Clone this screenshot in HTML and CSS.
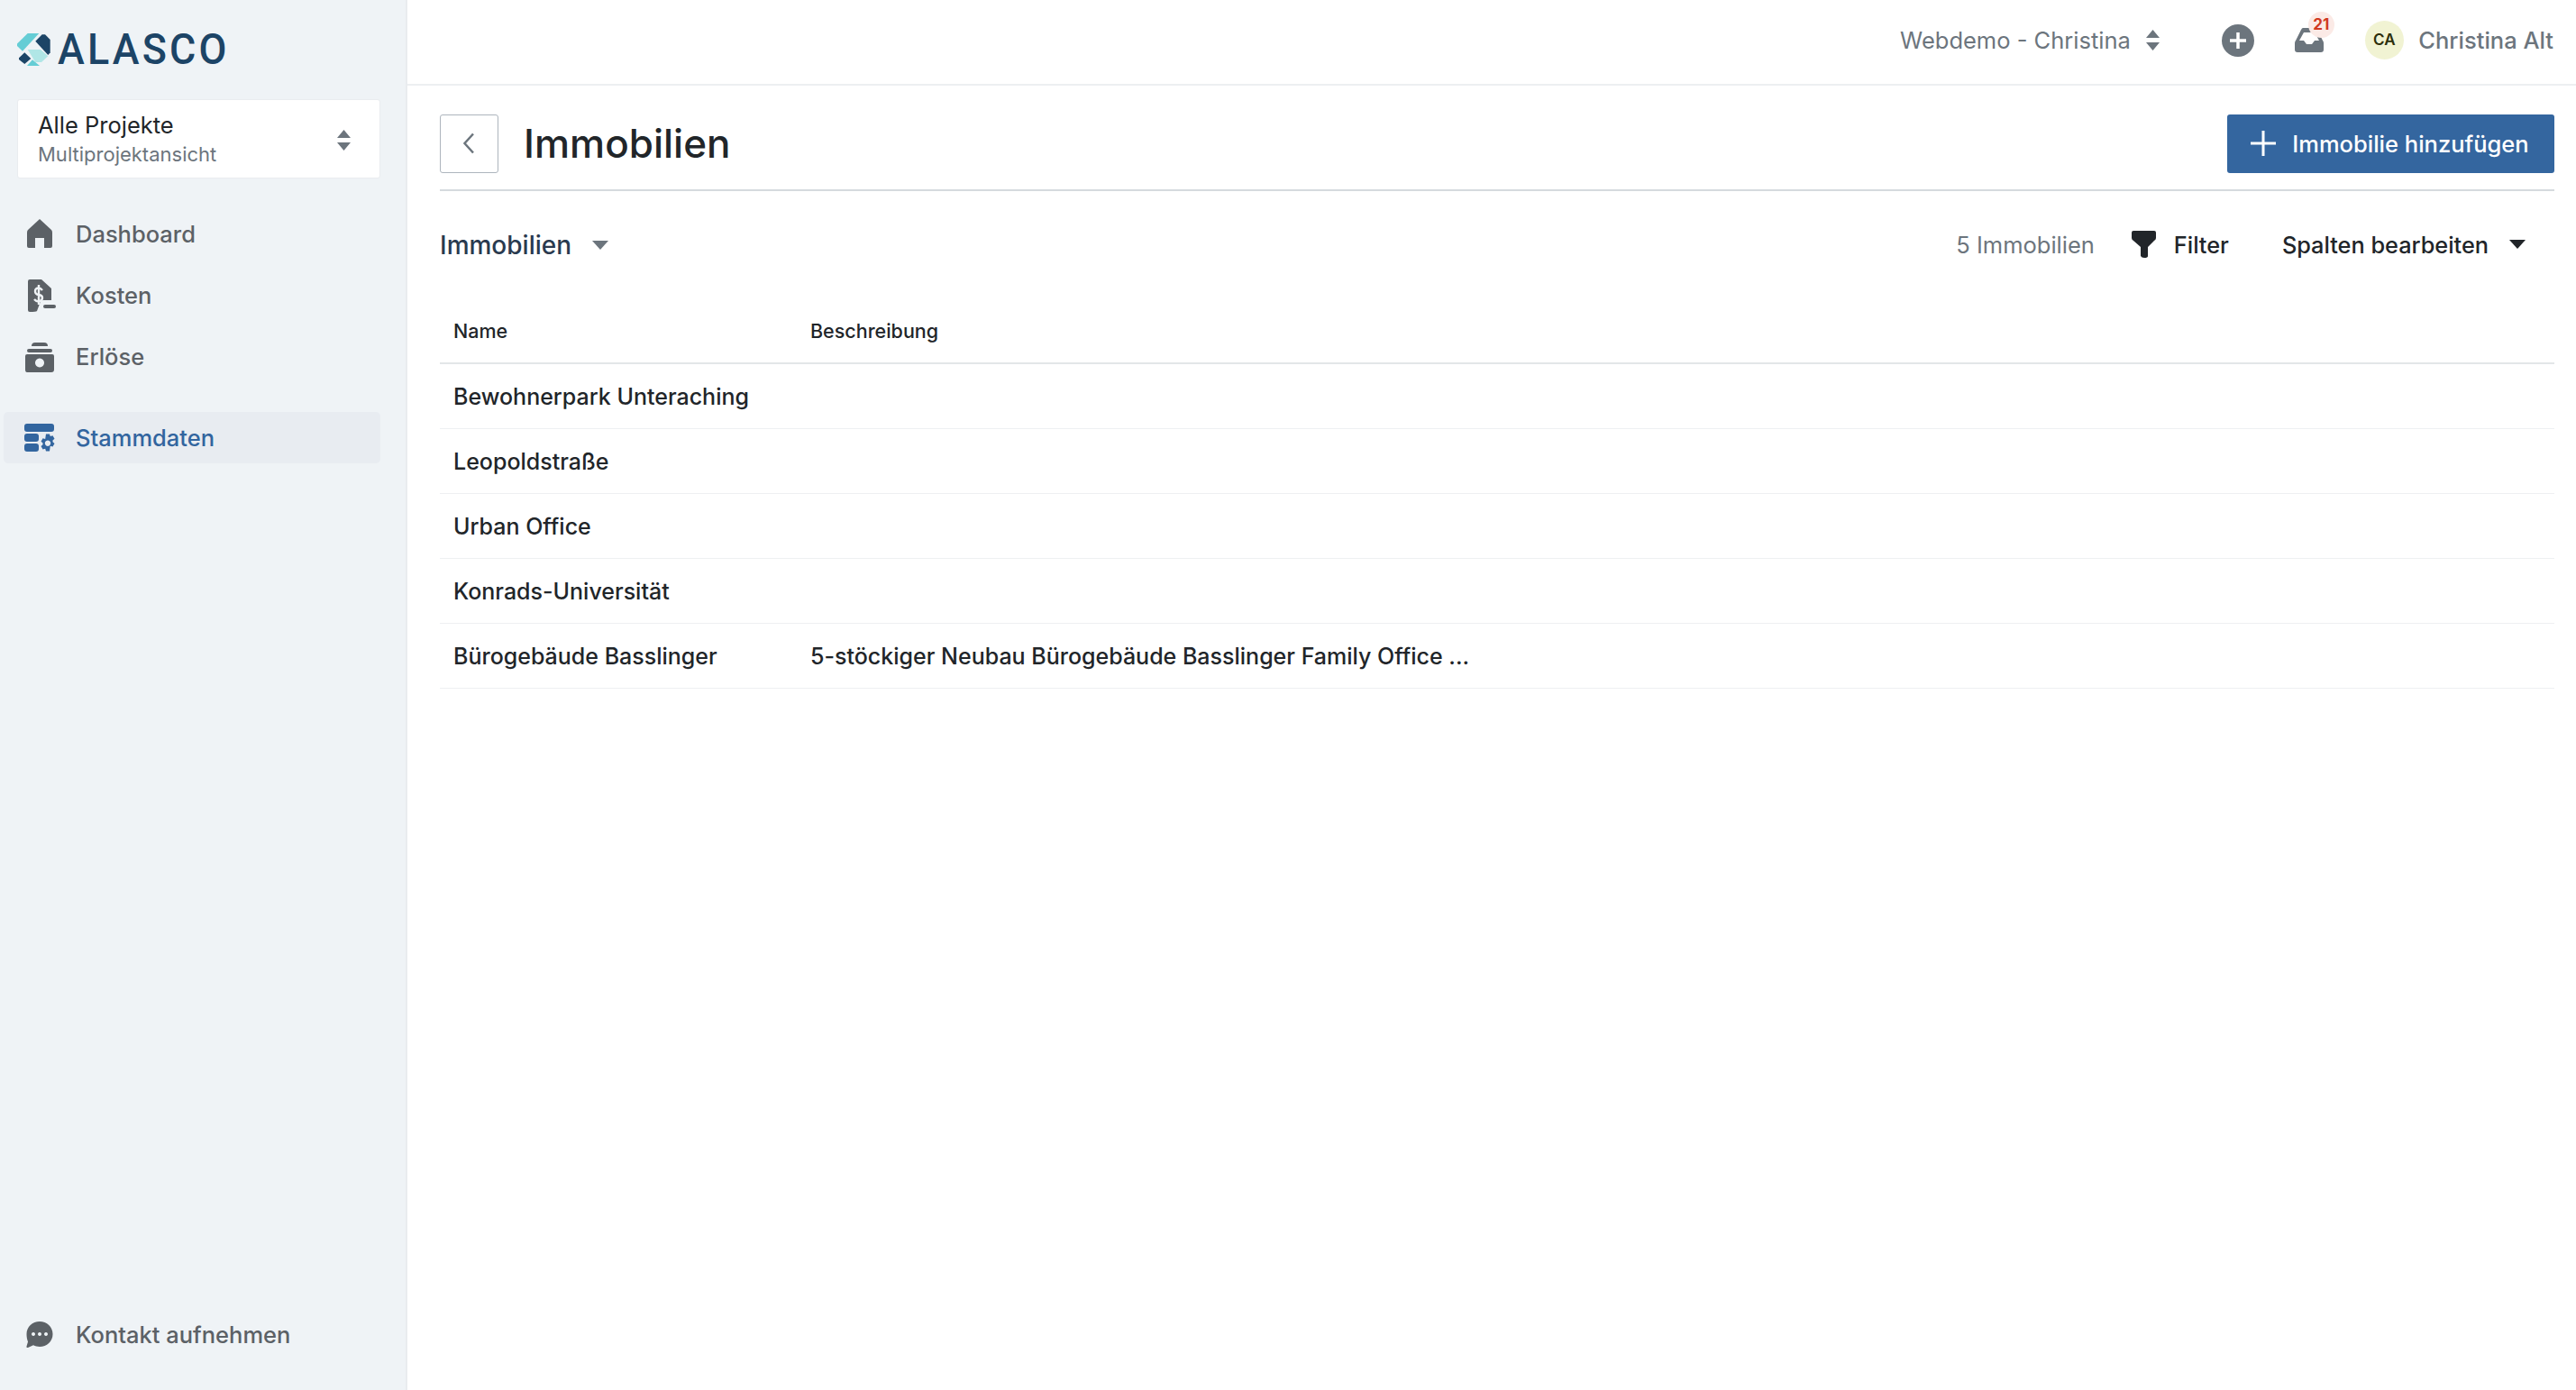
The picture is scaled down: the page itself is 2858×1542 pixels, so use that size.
FILE: index.html
```html
<!DOCTYPE html>
<html lang="de">
<head>
    <meta charset="UTF-8">
    <title>Immobilien</title>
    <link rel="stylesheet" href="styles.css">
</head>
<body>
    <aside class="sidebar">
        <div class="logo">
            <svg class="logo-mark" viewBox="0 0 37 36" width="37" height="36">
                <polygon fill="#65cdd5" points="0,11.5 11.7,0 24.3,0 6,19.7 0,14"/>
                <polygon fill="#1c4466" points="20.3,8.7 27.7,1.3 31,1.3 36.7,7 36.7,21.3 34.3,24"/>
                <polygon fill="#b0e6e6" points="11.7,18 26,18 34.3,25.3 27,32 20.3,32"/>
                <polygon fill="#1c4466" points="2,27.3 8.3,21.3 15.3,28 8.3,34 2,29"/>
                <polygon fill="#65cdd5" points="11,36 17,29.3 25,36"/>
            </svg>
            <span class="logo-text">ALASCO</span>
        </div>

        <div class="project-select">
            <div>
                <div class="project-name">Alle Projekte</div>
                <div class="project-sub">Multiprojektansicht</div>
            </div>
            <svg class="updown" viewBox="0 0 15 23" width="15" height="23">
                <path d="M7.5 0 15 9H0zM0 14h15l-7.5 9z"/>
            </svg>
        </div>

        <nav class="nav">
            <a class="nav-item">
                <svg class="nav-icon" viewBox="0 0 36 34" width="36" height="34">
                    <path d="M18 0 31 12q1 1 1 3v15q0 2-2 2h-7V21H13v11H6q-2 0-2-2V15q0-2 1-3z"/>
                </svg>
                Dashboard
            </a>
            <a class="nav-item">
                <svg class="nav-icon" viewBox="0 0 36 38" width="36" height="38">
                    <path d="M7 1H20L31 11V24H22Q19 24 18 28L15 36Q14 37 7 37 5 37 5 35V3Q5 1 7 1Z"/>
                    <path fill="none" stroke="#eff3f6" stroke-width="2.4" d="M21 13Q19 10.500 17 10.500 13 10.500 13 14t4 4 4 3.500-4 4q-3 0-5-2.500M17 7V29"/>
                    <rect x="22" y="29" width="14" height="4" rx="2"/>
                </svg>
                Kosten
            </a>
            <a class="nav-item">
                <svg class="nav-icon" viewBox="0 0 36 34" width="36" height="34">
                    <path d="M9 5q0-4 4-4h10q4 0 4 4z"/>
                    <rect x="4" y="8" width="28" height="4" rx="2"/>
                    <path fill-rule="evenodd" d="M4 14h28q2 0 2 2v15q0 3-3 3H4q-2 0-2-3V16q0-2 2-2zm14 4.500a5 5 0 1 0 .01 0z"/>
                </svg>
                Erlöse
            </a>
            <a class="nav-item active">
                <svg class="nav-icon" viewBox="0 0 36 34" width="36" height="34">
                    <rect x="1" y="1" width="33" height="9" rx="3"/>
                    <rect x="1" y="12" width="16" height="9" rx="3"/>
                    <rect x="1" y="23" width="16" height="9" rx="3"/>
                    <path fill-rule="evenodd" d="M25 14h4l.8 2.500 2.700-.8 2 3.500-2 1.800v1.800l2 1.800-2 3.500-2.700-.8L29 33h-4l-.8-2.700-2.700.8-2-3.500 2-1.800V24l-2-1.800 2-3.500 2.700.8zm2 7a3.200 3.200 0 1 0 .01 0z" transform="translate(0 -1.500)"/>
                </svg>
                Stammdaten
            </a>
        </nav>

        <a class="nav-item contact">
            <svg class="nav-icon" viewBox="0 0 36 34" width="36" height="34">
                <path fill-rule="evenodd" d="M18 2c8 0 14.500 6 14.500 14S26 30 18 30c-2.500 0-5-.6-7-1.700L5 31q-2 .5-1.500-1.500l1.500-5C4 22 3.500 19 3.500 16 3.500 8 10 2 18 2zM11 14a2 2 0 1 0 .01 0zm7 0a2 2 0 1 0 .01 0zm7 0a2 2 0 1 0 .01 0z"/>
            </svg>
            Kontakt aufnehmen
        </a>
    </aside>

    <div class="main">
        <header class="topbar">
            <div class="workspace">
                Webdemo - Christina
                <svg class="updown" viewBox="0 0 15 23" width="15" height="23">
                    <path d="M7.5 0 15 9H0zM0 14h15l-7.5 9z"/>
                </svg>
            </div>
            <div class="plus-circle">
                <svg viewBox="0 0 20 20" width="20" height="20">
                    <path d="M10 1v18M1 10h18" stroke="#fff" stroke-width="3.500"/>
                </svg>
            </div>
            <div class="inbox">
                <svg viewBox="0 0 32 27" width="32" height="27">
                    <path d="M9 0h13q2 0 3 2l6 12q1 1 1 3v7q0 3-3 3H3q-3 0-3-3v-7q0-2 1-3L7 2q1-2 2-2zm1 5-5 9h5l3 4h6l3-4h5l-5-9z" fill-rule="evenodd"/>
                </svg>
                <span class="badge">21</span>
            </div>
            <div class="user">
                <span class="avatar">CA</span>
                Christina Alt
            </div>
        </header>

        <main class="content">
            <div class="page-head">
                <a class="back">
                    <svg viewBox="0 0 14 24" width="14" height="24">
                        <path d="M12 1.500 2.500 12l9.500 10.500" fill="none" stroke="#6c757d" stroke-width="2.500"/>
                    </svg>
                </a>
                <h1>Immobilien</h1>
                <a class="add-button">
                    <svg viewBox="0 0 30 30" width="30" height="30">
                        <path d="M15 1v28M1 15h28" stroke="#fff" stroke-width="3"/>
                    </svg>
                    Immobilie hinzufügen
                </a>
            </div>

            <div class="toolbar">
                <div class="view-select">
                    Immobilien
                    <span class="caret grey"></span>
                </div>
                <div class="tools">
                    <span class="count">5 Immobilien</span>
                    <span class="tool filter">
                        <svg viewBox="0 0 27 30" width="27" height="30">
                            <path d="M2 0h23q2 0 2 2v6q0 2-2 3l-7 7v10q0 2-4 2-3 0-4-2V18l-8-7q-2-1-2-3V2q0-2 2-2z" fill="#212529"/>
                        </svg>
                        Filter
                    </span>
                    <span class="tool columns">
                        Spalten bearbeiten
                        <span class="caret dark"></span>
                    </span>
                </div>
            </div>

            <table class="grid">
                <thead>
                    <tr><th class="col-name">Name</th><th>Beschreibung</th></tr>
                </thead>
                <tbody>
                    <tr><td>Bewohnerpark Unteraching</td><td></td></tr>
                    <tr><td>Leopoldstraße</td><td></td></tr>
                    <tr><td>Urban Office</td><td></td></tr>
                    <tr><td>Konrads-Universität</td><td></td></tr>
                    <tr><td>Bürogebäude Basslinger</td><td>5-stöckiger Neubau Bürogebäude Basslinger Family Office ...</td></tr>
                </tbody>
            </table>
        </main>
    </div>
</body>
</html>
```
FILE: styles.css
```css
* {
    box-sizing: border-box;
}

html, body {
    height: 100%;
}

body {
    margin: 0;
    display: flex;
    font-family: Inter, "Liberation Sans", sans-serif;
    font-size: 25.5px;
    color: #212529;
    background-color: #fff;
    overflow: hidden;
}

/* sidebar */
.sidebar {
    width: 452px;
    flex-shrink: 0;
    height: 100%;
    display: flex;
    flex-direction: column;
    background-color: #eff3f6;
    border-right: 2px solid #e9ecef;
}

.logo {
    display: flex;
    align-items: center;
    gap: 8px;
    height: 36px;
    margin: 37px 0 0 19px;
}

.logo-mark {
    flex-shrink: 0;
}

/* the real wordmark is a narrow face, so squeeze Roboto a bit */
.logo-text {
    display: inline-block;
    font-family: Roboto, sans-serif;
    font-weight: 500;
    font-size: 49px;
    line-height: 36px;
    letter-spacing: 3.5px;
    color: #1c4466;
    transform: scaleX(0.915);
    transform-origin: left center;
}

.project-select {
    display: flex;
    align-items: center;
    justify-content: space-between;
    width: 403px;
    height: 88px;
    margin: 37px 0 0 19px;
    padding: 2px 32px 0 22px;
    background-color: #fff;
    border: 1px solid #e9ecef;
    border-radius: 3px;
}

.project-name {
    line-height: 32px;
}

.project-sub {
    font-size: 22px;
    line-height: 32px;
    color: #6c757d;
}

.updown {
    fill: #6c757d;
}

.nav {
    display: flex;
    flex-direction: column;
    margin-top: 33px;
}

.nav-item {
    display: flex;
    align-items: center;
    gap: 22px;
    width: 418px;
    height: 57px;
    margin-left: 4px;
    margin-bottom: 11px;
    padding-left: 22px;
    border-radius: 5px;
    font-weight: 500;
    color: #5c6166;
}

.nav-icon {
    flex-shrink: 0;
    fill: #5c6166;
}

.nav-item.active {
    margin-top: 22px;
    background-color: #e8ecf1;
    color: #32659f;
}

.nav-item.active .nav-icon {
    fill: #32659f;
}

.contact {
    margin-top: auto;
    margin-bottom: 33px;
}

/* top bar */
.main {
    flex: 1;
    min-width: 0;
    display: flex;
    flex-direction: column;
}

.topbar {
    height: 95px;
    flex-shrink: 0;
    display: flex;
    align-items: center;
    justify-content: flex-end;
    padding: 0 25px 4px 0;
    border-bottom: 2px solid #edeff1;
    color: #6c757d;
}

.workspace {
    display: flex;
    align-items: center;
    gap: 17px;
}

.plus-circle {
    width: 36px;
    height: 36px;
    margin-left: 69px;
    display: flex;
    align-items: center;
    justify-content: center;
    border-radius: 50%;
    background-color: #6c757d;
}

.inbox {
    position: relative;
    display: flex;
    margin-left: 45px;
    fill: #6c757d;
}

.badge {
    position: absolute;
    top: -18px;
    left: 15px;
    width: 29px;
    height: 29px;
    border-radius: 50%;
    background-color: #fbeae6;
    color: #d0391f;
    font-size: 17px;
    font-weight: 700;
    line-height: 29px;
    text-align: center;
}

.user {
    display: flex;
    align-items: center;
    gap: 16.5px;
    margin-left: 46px;
    font-weight: 500;
}

.avatar {
    width: 43px;
    height: 43px;
    border-radius: 50%;
    background-color: #f1f3d3;
    color: #2c2f0b;
    font-size: 17px;
    font-weight: 600;
    line-height: 43px;
    text-align: center;
}

/* content */
.content {
    flex: 1;
    padding: 32px 24px 0 36px;
}

.page-head {
    display: flex;
    align-items: center;
    height: 85px;
    padding-bottom: 19px;
    border-bottom: 2px solid #d5dade;
}

.back {
    width: 65px;
    height: 65px;
    display: flex;
    align-items: center;
    justify-content: center;
    padding-right: 2px;
    border: 1px solid #adb5bd;
    border-radius: 3px;
}

h1 {
    margin: 0 0 0 28px;
    font-size: 44px;
    font-weight: 500;
}

.add-button {
    margin-left: auto;
    width: 363px;
    height: 65px;
    display: flex;
    align-items: center;
    justify-content: center;
    gap: 17px;
    padding-right: 3px;
    background-color: #34669f;
    color: #fff;
    border-radius: 3px;
    font-weight: 500;
}

.toolbar {
    display: flex;
    align-items: center;
    justify-content: space-between;
    height: 58px;
    margin-top: 31px;
}

.view-select {
    display: flex;
    align-items: center;
    gap: 23px;
    font-size: 28px;
    font-weight: 500;
    color: #2a3a4f;
}

.caret {
    width: 0;
    height: 0;
    border-left: 9px solid transparent;
    border-right: 9px solid transparent;
    border-top: 10px solid #6c757d;
}

.caret.dark {
    border-top-color: #212529;
}

.tools {
    display: flex;
    align-items: center;
    padding: 0 32px 2px 0;
}

.count {
    color: #6c757d;
}

.tool {
    display: flex;
    align-items: center;
    font-size: 25.3px;
    font-weight: 450;
}

.filter {
    gap: 20px;
    margin-left: 41px;
}

.columns {
    gap: 23px;
    margin-left: 59px;
}

.grid {
    width: 100%;
    border-collapse: collapse;
    table-layout: fixed;
    margin-top: 30px;
}

.grid th {
    height: 72px;
    padding: 0 15px;
    text-align: left;
    font-size: 21.5px;
    font-weight: 450;
    border-bottom: 2px solid #e3e6e8;
}

.grid .col-name {
    width: 396px;
}

.grid td {
    height: 72px;
    padding: 2px 15px 0;
    font-size: 25px;
    font-weight: 450;
    border-bottom: 1px solid #eef0f2;
}
```
